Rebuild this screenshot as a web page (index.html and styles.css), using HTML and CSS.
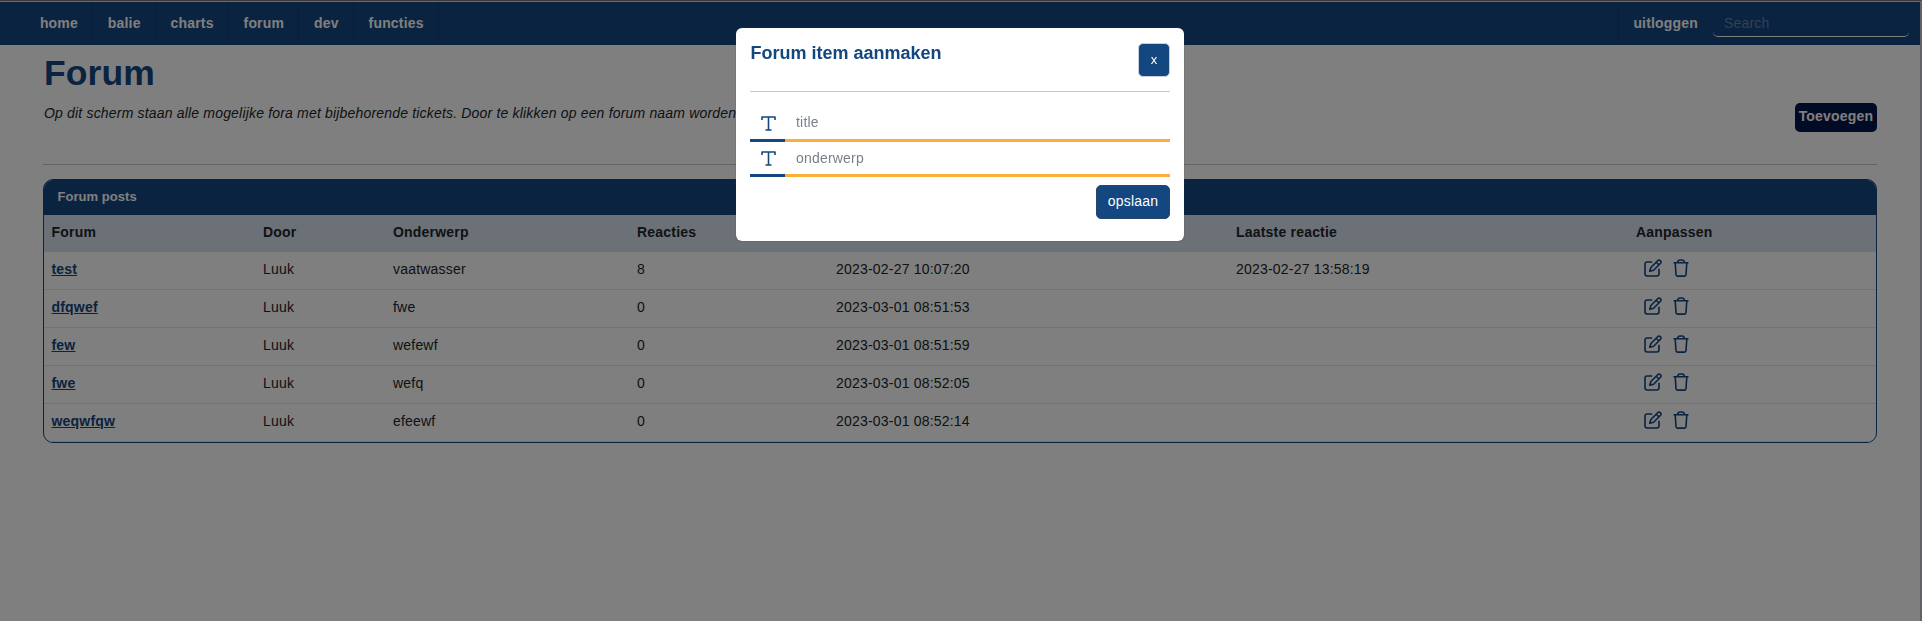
FILE: index.html
```html
<!DOCTYPE html>
<html lang="nl">
<head>
<meta charset="utf-8">
<title>Forum</title>
<link rel="stylesheet" href="styles.css">
</head>
<body>
<svg class="sprite" width="0" height="0">
  <symbol id="edit" viewBox="0 0 18 18"><path d="M8.200 3H3.200Q1 3 1 5.200V14.800Q1 17 3.200 17H12.800Q15 17 15 14.800V9.800M5.700 12.300L6.900 8.500L13.600 1.700Q15 .500 16.500 1.700Q17.700 3.100 16.300 4.500L9.600 11.200ZM12.200 3.200L14.800 5.800"/></symbol>
  <symbol id="trash" viewBox="0 0 16 18"><path d="M.5 3.800H15.500M2.200 3.800L3 15.700Q3.100 17.100 4.400 17.100H11.600Q12.900 17.100 13 15.700L13.800 3.800M4.500 3.500Q5 1 7 1H9Q11 1 11.500 3.500"/></symbol>
  <symbol id="text" viewBox="0 0 15 15"><path d="M1 4V1H14V4M7.500 1V14M4.500 14H10.500"/></symbol>
</svg>
<div class="page">
  <nav class="nav">
    <a>home</a><a>balie</a><a>charts</a><a>forum</a><a>dev</a><a>functies</a>
    <a class="logout">uitloggen</a>
    <input class="search" placeholder="Search">
  </nav>
  <main class="main">
    <h1>Forum</h1>
    <div class="intro">
      <p>Op dit scherm staan alle mogelijke fora met bijbehorende tickets. Door te klikken op een forum naam worden</p>
      <button class="add">Toevoegen</button>
    </div>
    <section class="card">
      <h2>Forum posts</h2>
      <div class="row head"><span>Forum</span><span>Door</span><span>Onderwerp</span><span>Reacties</span><span></span><span>Laatste reactie</span><span>Aanpassen</span></div>
      <div class="row"><a>test</a><span>Luuk</span><span>vaatwasser</span><span>8</span><span>2023-02-27 10:07:20</span><span>2023-02-27 13:58:19</span><span class="actions"><svg class="edit"><use href="#edit"/></svg><svg class="trash"><use href="#trash"/></svg></span></div>
      <div class="row"><a>dfqwef</a><span>Luuk</span><span>fwe</span><span>0</span><span>2023-03-01 08:51:53</span><span></span><span class="actions"><svg class="edit"><use href="#edit"/></svg><svg class="trash"><use href="#trash"/></svg></span></div>
      <div class="row"><a>few</a><span>Luuk</span><span>wefewf</span><span>0</span><span>2023-03-01 08:51:59</span><span></span><span class="actions"><svg class="edit"><use href="#edit"/></svg><svg class="trash"><use href="#trash"/></svg></span></div>
      <div class="row"><a>fwe</a><span>Luuk</span><span>wefq</span><span>0</span><span>2023-03-01 08:52:05</span><span></span><span class="actions"><svg class="edit"><use href="#edit"/></svg><svg class="trash"><use href="#trash"/></svg></span></div>
      <div class="row"><a>weqwfqw</a><span>Luuk</span><span>efeewf</span><span>0</span><span>2023-03-01 08:52:14</span><span></span><span class="actions"><svg class="edit"><use href="#edit"/></svg><svg class="trash"><use href="#trash"/></svg></span></div>
    </section>
  </main>
</div>
<div class="overlay">
  <form class="modal">
    <header><h3>Forum item aanmaken</h3><button type="button" class="close">x</button></header>
    <label class="field"><span><svg><use href="#text"/></svg></span><input placeholder="title"></label>
    <label class="field"><span><svg><use href="#text"/></svg></span><input placeholder="onderwerp"></label>
    <button type="button" class="save">opslaan</button>
  </form>
</div>
</body>
</html>
```
FILE: styles.css
```css
* { box-sizing: border-box; }
body { margin: 0; background: #fff; color: #212529; font: 14px/21px "Liberation Sans", Arial, sans-serif; letter-spacing: .2px; overflow: hidden; }
button, input { font: inherit; letter-spacing: inherit; }
h1, h2, h3, p { margin: 0; }
.sprite { display: block; height: 0; }
svg { fill: none; stroke: #144680; stroke-width: 1.6; stroke-linejoin: round; }
.page { height: 621px; border-top: 1px solid #7c7076; border-right: 2px solid #c4c0d0; }
.nav { height: 44px; border-top: 1px solid #d8d8e0; background: #144680; display: flex; padding: 0 11px 0 25px; }
.nav a { height: 42px; padding: 11px 14px 0 14.9px; border-right: 1px solid #123f73; color: #fff; font-weight: bold; letter-spacing: .18px; }
.nav .logout { margin-left: auto; border-right: 0; border-left: 1px solid #123f73; padding-right: 15px; }
.search { width: 196px; height: 34px; margin-top: 1px; border: 0; border-bottom: 1px solid #fff; border-radius: 5px; background: transparent; padding: 8px 11px 2px; outline: 0; }
.search::placeholder { color: #6484a8; opacity: 1; }
.main { padding: 6px 43px 0; }
h1 { padding-left: 1px; color: #144680; font-size: 35.5px; line-height: 45px; height: 45px; letter-spacing: .1px; }
.intro { height: 69px; border-bottom: 1px solid #c8c8c8; display: flex; justify-content: space-between; padding-top: 7px; margin-bottom: 14px; }
.intro p { padding-left: 1px; font-style: italic; letter-spacing: .18px; }
.add { width: 82px; height: 29px; border: 0; border-radius: 5px; padding: 0 0 2px; background: #05174a; color: #fff; font-weight: bold; }
.card { border: 1px solid #144680; border-radius: 10px; overflow: hidden; }
.card h2 { height: 35px; background: #144680; color: #fff; font-size: 13px; line-height: 34px; padding-left: 13.5px; letter-spacing: .05px; }
.row { display: grid; grid-template-columns: 211.5px 130px 244px 199px 400px 400px 1fr; height: 38px; padding: 7px 0 0 7.5px; border-bottom: 1px solid #dee2e6; }
.head { height: 37px; background: #d8e2f0; font-weight: bold; border: 0; }
.row a { color: #144680; font-weight: bold; text-decoration: underline; }
.actions { display: flex; gap: 11px; padding-left: 7.5px; }
.edit { width: 18px; height: 18px; }
.trash { width: 16px; height: 18px; }
.overlay { position: fixed; inset: 0; background: rgba(0,0,0,.5); display: flex; justify-content: center; align-items: flex-start; padding: 28px 2px 0 0; }
.modal { width: 448px; height: 213px; border-radius: 6px; background: #fff; padding: 15px 14px; box-shadow: 0 0 1px #333; display: flex; flex-direction: column; }
.modal header { display: flex; justify-content: space-between; height: 49px; border-bottom: 1px solid #c8c8c8; margin-bottom: 15px; }
.modal h3 { padding-left: .5px; color: #144680; font-size: 18px; letter-spacing: 0; }
.close { width: 32px; height: 34px; border: 1px solid #c6d2e0; border-radius: 5px; padding: 0 0 2px; background: #144680; color: #fff; font-size: 13px; }
.field { display: flex; height: 35px; }
.field span { width: 35px; border-bottom: 3px solid #144680; padding: 9px 0 0 11px; }
.field svg { display: block; width: 15px; height: 15px; }
.field input { flex: 1; border: 0; border-bottom: 3px solid #fbaf3b; padding: 0 11px 1px; outline: 0; }
.field + .field input { padding: 1px 11px 0; }
.field input::placeholder { color: #7b8188; opacity: 1; }
.save { align-self: flex-end; width: 74px; height: 34px; margin-top: 8px; border: 1px solid #26466a; border-radius: 5px; padding: 0 0 2px; background: #144680; color: #fff; }
```
